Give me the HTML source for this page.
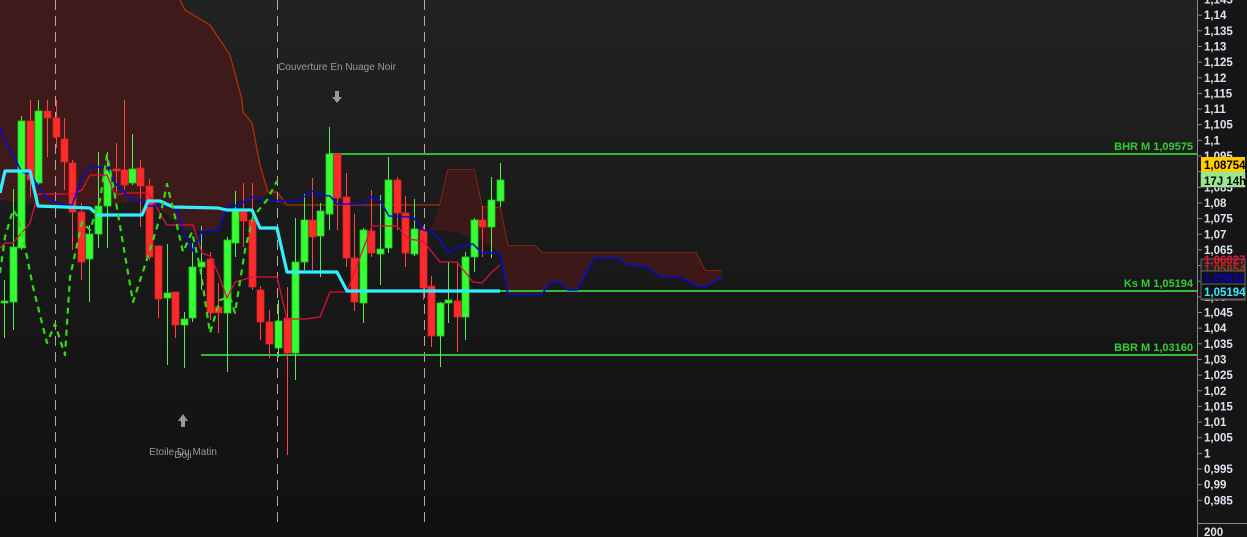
<!DOCTYPE html>
<html><head><meta charset="utf-8"><style>
html,body{margin:0;padding:0;background:#151515;overflow:hidden}
svg{display:block}
text{font-family:"Liberation Sans",Arial,sans-serif}
</style></head><body>
<svg id="s" width="1247" height="537" viewBox="0 0 1247 537" xmlns="http://www.w3.org/2000/svg">
<defs><linearGradient id="bg" x1="0" y1="0" x2="0" y2="1"><stop offset="0" stop-color="#222"/><stop offset="1" stop-color="#101010"/></linearGradient></defs>
<rect width="1247" height="537" fill="url(#bg)"/>
<rect x="1198" width="49" height="537" fill="#151515"/>
<!-- cloud left -->
<polygon fill="#3f1a1b" points="0,0 180,0 185,10 210,25 230,55 242,100 243,112 252,123 260,165 268,192 277,192 287,205 280,205 270,192 260,200 240,200 230,205 215,231 185,231 150,200 100,205 40,205 0,200"/>
<polyline fill="none" stroke="#b03000" stroke-width="1.3" points="180,0 185,10 210,25 230,55 242,100 243,112 252,123 260,165 268,192 277,192 287,205 440,205 448,170 474,170 482,207 500,208 508,246 535,246 542,253 696,253 705,271 722,271"/>
<polygon fill="#3d1819" points="440,205 448,170 474,170 482,207 500,208 508,246 535,246 542,253 696,253 705,271 722,271 722,278 715,281 705,287 697,286 680,277 662,277 645,266 628,265 618,258 594,258 577,290 568,290 560,282 551,282 542,294 530,295 508,295 500,253 480,240 455,232 430,230"/>
<g id="g"></g>
<!-- axis -->
<line x1="1197.5" y1="0" x2="1197.5" y2="537" stroke="#888" stroke-width="1"/>
<line x1="1198" y1="523.5" x2="1247" y2="523.5" stroke="#888"/>
<g id="ax" fill="#dde3ee" font-size="11.5" font-weight="bold"></g>
<text x="1204" y="536" fill="#dde3ee" font-size="11.5" font-weight="bold">200</text>
<!-- labels -->
<g font-size="11" font-weight="bold" fill="#33cc33" text-anchor="end">
<text x="1193" y="150">BHR M 1,09575</text>
<text x="1193" y="287">Ks M 1,05194</text>
<text x="1193" y="351">BBR M 1,03160</text>
</g>
<g font-size="11.5" font-weight="bold">
<rect x="1201" y="259" width="44" height="41" fill="#222" stroke="#666"/>
<text x="1204" y="264" fill="#ee1133">1,06027</text>
<text x="1204" y="273" fill="#aa3311">1,05854</text>
<rect x="1201" y="271" width="44" height="13" fill="#111" stroke="#666"/>
<text x="1204" y="282" fill="#0000dd">1,05611</text>
<rect x="1201" y="284" width="44" height="15" fill="#111" stroke="#666"/>
<text x="1204" y="296" fill="#33eeff">1,05194</text>
<rect x="1201" y="173" width="44" height="14" fill="#222" stroke="#666"/>
<rect x="1201" y="157" width="44" height="15" fill="#ffcc00"/>
<text x="1204" y="169" fill="#000">1,08754</text>
<rect x="1201" y="172" width="44" height="15" fill="#99e88f"/>
<text x="1204" y="185" fill="#000">17J 14h</text>
</g>
<g font-size="10" fill="#9a9a9a">
<text x="337" y="70" text-anchor="middle">Couverture En Nuage Noir</text>
<text x="183" y="455" text-anchor="middle">Etoile Du Matin</text>
<text x="183" y="458" text-anchor="middle">Doji</text>
</g>
<path d="M335 91h4v6h3l-5 6l-5-6h3z" fill="#999"/>
<path d="M181 427v-6h-3l5-7l5 7h-3v6z" fill="#999"/>
</svg>
<script>
var NS="http://www.w3.org/2000/svg",g=document.getElementById('g');
function el(t,a){var e=document.createElementNS(NS,t);for(var k in a)e.setAttribute(k,a[k]);g.appendChild(e);return e;}
// vertical dashed
[55,277,424].forEach(function(x){el('line',{x1:x+.5,y1:0,x2:x+.5,y2:523,stroke:'#c8a0a0','stroke-width':1,'stroke-dasharray':'10,6'});});
// horizontal levels
el('line',{x1:330,y1:154,x2:1197,y2:154,stroke:'#33bb33','stroke-width':2});
el('line',{x1:500,y1:291,x2:1197,y2:291,stroke:'#33bb33','stroke-width':2});
el('line',{x1:201,y1:355,x2:1197,y2:355,stroke:'#33bb33','stroke-width':2});
// candles: x, bodyTop, bodyBot, wickTop, wickBot, green?
var C=[[4,301,303,280,338,1],[13,247,302,189,330,1],[21,121,248,116,250,1],[30,121,180,100,197,0],[38,111,183,100,185,1],[47,111,118,100,157,0],[56,118,137,100,148,0],[64,139,162,118,190,0],[72,163,212,160,250,0],[81,212,262,203,280,0],[89,234,259,225,302,1],[98,206,234,152,248,1],[107,170,206,152,248,1],[116,169,171,143,193,0],[124,170,185,100,190,0],[132,169,183,134,185,1],[140,168,186,160,227,0],[149,186,257,179,260,0],[158,246,299,245,318,0],[167,293,298,244,365,1],[175,292,325,292,338,0],[184,319,325,312,368,1],[192,267,318,243,322,1],[201,262,267,226,290,1],[210,259,313,252,320,0],[218,307,313,283,333,0],[227,240,313,237,372,1],[235,210,243,191,257,1],[243,212,221,183,247,0],[252,220,287,183,290,0],[260,290,322,286,340,0],[269,322,344,310,358,0],[278,321,348,300,357,1],[287,318,353,287,455,0],[295,262,353,218,380,1],[304,220,262,194,270,1],[312,220,237,178,270,0],[320,211,236,203,277,1],[329,154,214,127,230,1],[337,154,198,153,230,0],[346,197,258,173,267,0],[354,258,302,214,311,0],[363,230,303,228,323,1],[371,231,253,190,257,0],[380,249,254,195,285,1],[388,180,248,157,253,1],[397,180,213,177,230,0],[405,213,253,196,267,0],[414,229,254,199,256,1],[423,230,288,226,300,0],[431,286,336,276,347,0],[440,303,336,302,367,1],[448,300,303,262,323,1],[457,301,317,263,352,0],[465,257,317,252,340,1],[474,220,257,218,272,1],[482,220,227,206,257,0],[491,200,227,177,258,1],[500,180,201,163,207,1]];
C.forEach(function(c){var col=c[5]?'#33ff33':'#ff2a2a',wc=c[5]?'#55ee55':'#ff4444';
el('line',{x1:c[0]+.5,y1:c[3],x2:c[0]+.5,y2:c[4],stroke:wc,'stroke-width':1});
el('rect',{x:c[0]-3,y:c[1],width:7,height:Math.max(2,c[2]-c[1]),fill:col,stroke:c[5]?'#22cc22':'#dd2020','stroke-width':.8});});
function pl(p,s,w,d){var a={points:p,fill:'none',stroke:s,'stroke-width':w,'stroke-linejoin':'round'};if(d)a['stroke-dasharray']=d;el('polyline',a);}
// red line
pl("0,248 5,243 13,243 30,223 38,194 73,194 82,190 90,175 107,175 115,195 125,193 148,193 167,225 193,225 202,253 210,256 218,273 227,298 235,282 253,277 277,277 287,319 305,319 320,317 330,292 347,292 357,265 372,226 397,226 408,239 423,241 440,262 457,262 473,282 482,283 492,272 500,265","#e0103a",1.3);
// blue line
pl("0,128 5,140 22,172 30,174 47,198 63,205 72,205 82,178 89,167 107,167 115,183 132,200 142,200 148,206 167,206 177,210 185,235 193,251 202,231 218,231 227,206 235,206 253,197 262,200 297,201 313,191 320,195 330,196 337,204 363,204 372,197 380,201 389,216 413,217 423,230 432,232 440,240 448,253 457,247 473,244 482,253 500,253 508,294 530,295 542,294 551,282 560,282 568,290 577,290 594,258 618,258 628,265 645,266 662,277 680,277 697,286 705,287 715,281 722,278","#0a0ad0",1.6);
// cyan kijun
pl("0,193 5,171 30,171 38,206 90,208 98,215 142,215 148,201 160,201 173,207 218,208 227,210 252,210 260,228 277,228 287,272 337,272 347,291 500,291","#33eeff",3.2);
// green dashed
pl("0,273 5,237 13,210 18,217 25,247 33,287 47,343 55,324 65,355 70,277 82,222 90,230 100,200 107,155 113,185 133,302 150,250 160,217 167,184 175,217 183,252 192,232 200,267 210,333 220,300 230,297 235,313 245,250 253,217 267,200 277,181","#33dd11",2.2,"6,5");
// axis labels
var ax=document.getElementById('ax'),lb=["1,145","1,14","1,135","1,13","1,125","1,12","1,115","1,11","1,105","1,1","1,095","1,09","1,085","1,08","1,075","1,07","1,065","1,06","1,055","1,05","1,045","1,04","1,035","1,03","1,025","1,02","1,015","1,01","1,005","1","0,995","0,99","0,985"];
lb.forEach(function(t,i){var y=-0.5+i*15.65;var l=document.createElementNS(NS,'line');l.setAttribute('x1',1197);l.setAttribute('x2',1202);l.setAttribute('y1',y);l.setAttribute('y2',y);l.setAttribute('stroke','#888');ax.appendChild(l);
var e=document.createElementNS(NS,'text');e.setAttribute('x',1204);e.setAttribute('y',y+4);e.textContent=t;ax.appendChild(e);});
</script>
</body></html>
